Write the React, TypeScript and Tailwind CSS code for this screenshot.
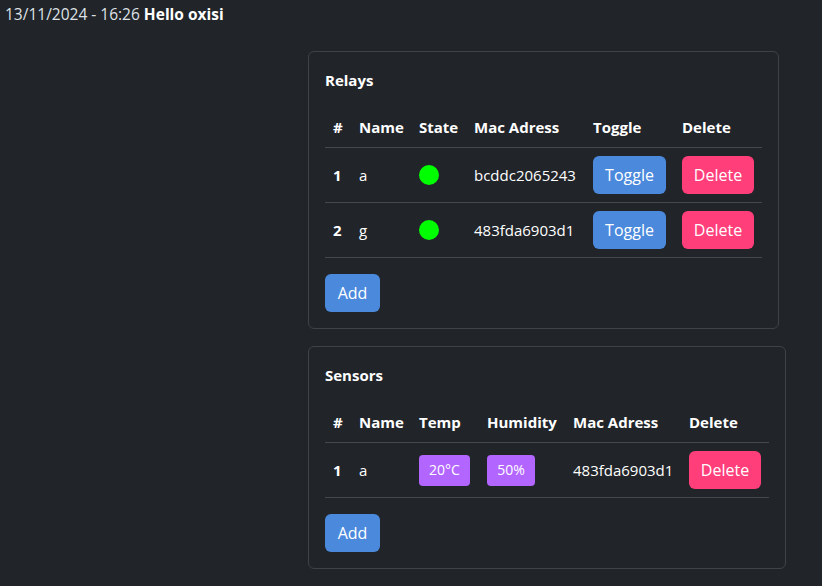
const relays = [
  { id: 1, name: "a", mac: "bcddc2065243" },
  { id: 2, name: "g", mac: "483fda6903d1" },
];

const sensors = [{ id: 1, name: "a", temp: "20°C", humidity: "50%", mac: "483fda6903d1" }];

function Btn({ color, className, children }: { color: "blue" | "pink"; className: string; children: React.ReactNode }) {
  const bg = color === "blue" ? "bg-[#4a89dc]" : "bg-[#ff3e7a]";
  return (
    <button className={`${bg} ${className} h-[38px] rounded-md text-white text-[16px] flex items-center justify-center`}>
      {children}
    </button>
  );
}

function Badge({ className, children }: { className: string; children: React.ReactNode }) {
  return (
    <span className={`${className} h-[31px] rounded bg-[#b266ff] text-white text-[14px] flex items-center justify-center`}>
      {children}
    </span>
  );
}

const th = "px-2 py-2 text-left font-bold leading-6 border-b border-[#45484d]";
const td = "px-2 py-2 leading-6 align-middle";

function RelaysCard() {
  return (
    <div className="w-fit rounded-md border border-[#3f4349] p-4">
      <h5 className="text-[15px] font-bold leading-6 text-white mb-[15px]">Relays</h5>
      <table className="w-[437px] table-fixed border-collapse text-white text-[15px]">
        <thead>
          <tr>
            <th className={`${th} w-[26px]`}>#</th>
            <th className={`${th} w-[60px]`}>Name</th>
            <th className={`${th} w-[55px]`}>State</th>
            <th className={`${th} w-[119px]`}>Mac Adress</th>
            <th className={`${th} w-[89px]`}>Toggle</th>
            <th className={`${th} w-[88px]`}>Delete</th>
          </tr>
        </thead>
        <tbody>
          {relays.map((r) => (
            <tr key={r.id} className="border-b border-[#45484d]">
              <td className={`${td} font-bold`}>{r.id}</td>
              <td className={td}>{r.name}</td>
              <td className={td}>
                <span className="block w-5 h-5 rounded-full bg-[#00ff00]" />
              </td>
              <td className={td}>{r.mac}</td>
              <td className={td}>
                <Btn color="blue" className="w-[73px]">Toggle</Btn>
              </td>
              <td className={td}>
                <Btn color="pink" className="w-[72px]">Delete</Btn>
              </td>
            </tr>
          ))}
        </tbody>
      </table>
      <Btn color="blue" className="w-[55px] mt-4">Add</Btn>
    </div>
  );
}

function SensorsCard() {
  return (
    <div className="w-fit rounded-md border border-[#3f4349] p-4">
      <h5 className="text-[15px] font-bold leading-6 text-white mb-[15px]">Sensors</h5>
      <table className="w-[444px] table-fixed border-collapse text-white text-[15px]">
        <thead>
          <tr>
            <th className={`${th} w-[26px]`}>#</th>
            <th className={`${th} w-[60px]`}>Name</th>
            <th className={`${th} w-[68px]`}>Temp</th>
            <th className={`${th} w-[86px]`}>Humidity</th>
            <th className={`${th} w-[116px]`}>Mac Adress</th>
            <th className={`${th} w-[88px]`}>Delete</th>
          </tr>
        </thead>
        <tbody>
          {sensors.map((s) => (
            <tr key={s.id} className="border-b border-[#45484d]">
              <td className={`${td} font-bold`}>{s.id}</td>
              <td className={td}>{s.name}</td>
              <td className={td}>
                <Badge className="w-[51px]">{s.temp}</Badge>
              </td>
              <td className={td}>
                <Badge className="w-[48px]">{s.humidity}</Badge>
              </td>
              <td className={td}>{s.mac}</td>
              <td className={td}>
                <Btn color="pink" className="w-[72px]">Delete</Btn>
              </td>
            </tr>
          ))}
        </tbody>
      </table>
      <Btn color="blue" className="w-[55px] mt-4">Add</Btn>
    </div>
  );
}

export default function App() {
  return (
    <div className="min-h-[586px] bg-[#212429] text-[#dee2e6] text-[15.5px] font-['Open_Sans',sans-serif]">
      <div className="px-[5px] pt-[2px] leading-6">
        13/11/2024 - 16:26 <span className="font-bold text-white">Hello oxisi</span>
      </div>
      <div className="ml-[308px] mt-[25px] flex flex-col gap-[17px]">
        <RelaysCard />
        <SensorsCard />
      </div>
    </div>
  );
}
